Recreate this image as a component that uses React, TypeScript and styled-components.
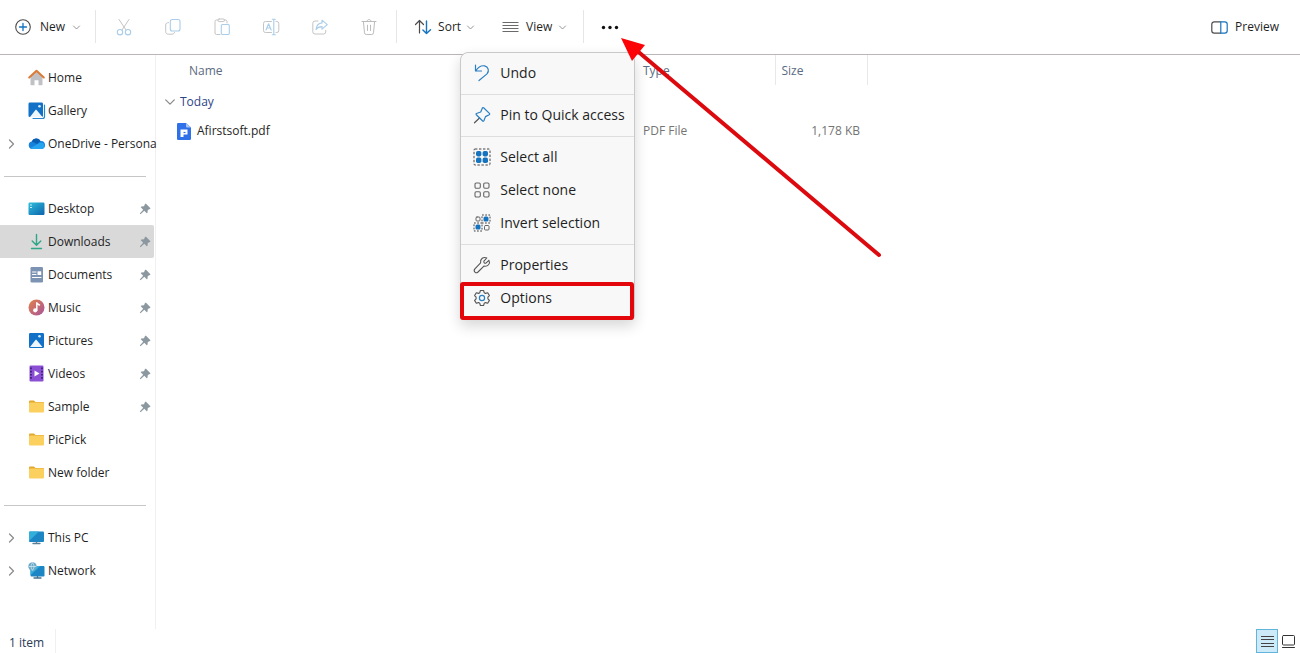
import React from 'react';
import styled, { createGlobalStyle } from 'styled-components';

const GlobalStyle = createGlobalStyle`
  *, *::before, *::after { box-sizing: border-box; }
  body {
    margin: 0;
    background: #fff;
    color: #1f1f1f;
    font: 12px/16px "Open Sans", "Noto Sans", sans-serif;
  }
  button {
    font: inherit;
    color: inherit;
    background: none;
    border: 0;
    padding: 0;
  }
  svg { display: block; flex: none; overflow: visible; }
`;

const Window = styled.div`
  display: flex;
  flex-direction: column;
  min-height: 100vh;
`;

const Toolbar = styled.header`
  position: relative;
  z-index: 2;
  display: flex;
  align-items: stretch;
  height: 55px;
  border-bottom: 1px solid #bdb6b9;
`;

const ToolGroup = styled.div<{ $pad?: number }>`
  position: relative;
  display: flex;
  align-items: stretch;
  padding: 0 ${(p) => p.$pad ?? 0}px;
`;

const Divider = styled.span`
  width: 1px;
  height: 33px;
  margin-top: 10px;
  background: #e6e6e6;
`;

const ToolButton = styled.button<{ $gap?: number }>`
  display: flex;
  align-items: center;
  gap: ${(p) => p.$gap ?? 6}px;
  padding: 0 14px;
`;

const IconButton = styled.button<{ $wide?: boolean }>`
  display: flex;
  align-items: center;
  justify-content: center;
  width: ${(p) => (p.$wide ? 51 : 49)}px;
`;

const Spacer = styled.div`
  flex: 1;
`;

const PreviewButton = styled(ToolButton)`
  padding-right: 21px;
`;

const Menu = styled.div`
  position: absolute;
  top: 52px;
  right: 0;
  width: 175px;
  border: 1px solid #c9c9c9;
  border-radius: 8px 8px 4px 4px;
  background: #f8f8f8;
  box-shadow: 0 6px 14px rgba(0, 0, 0, 0.16);
`;

const MenuSection = styled.div`
  padding: 3px 0 5px;
  & + & { border-top: 1px solid #dedede; }
`;

const MenuItem = styled.button<{ $marked?: boolean }>`
  position: relative;
  display: flex;
  align-items: center;
  gap: 9px;
  width: 100%;
  height: 33px;
  padding-left: 12px;
  font-size: 14px;
  line-height: 19px;
  white-space: nowrap;
  &::after {
    content: ${(p) => (p.$marked ? '""' : 'none')};
    position: absolute;
    inset: 1px 0 -6px -1px;
    border: 4px solid #e3070b;
    border-radius: 3px;
  }
`;

const Arrow = styled.svg`
  position: absolute;
  top: 36px;
  left: 35px;
  pointer-events: none;
`;

const Body = styled.div`
  display: flex;
  flex: 1;
`;

const Sidebar = styled.nav`
  display: flex;
  flex-direction: column;
  width: 156px;
  padding-top: 6px;
  border-right: 1px solid #f0f0f0;
`;

const SideItem = styled.a<{ $selected?: boolean }>`
  display: flex;
  align-items: center;
  height: 33px;
  margin-right: 1px;
  border-radius: 0 2px 2px 0;
  color: #1f1f1f;
  text-decoration: none;
  background: ${(p) => (p.$selected ? '#d9d9d9' : 'transparent')};
`;

const ChevronSlot = styled.span`
  width: 28px;
  padding-left: 8px;
`;

const SideLabel = styled.span`
  flex: 1;
  min-width: 0;
  margin-left: 3px;
  white-space: nowrap;
`;

const PinSlot = styled.span`
  padding-right: 3px;
`;

const Rule = styled.hr`
  width: 142px;
  height: 1px;
  margin: 16px 4px 15px;
  border: 0;
  background: #c6c6c6;
`;

const Files = styled.main`
  flex: 1;
  min-width: 0;
`;

const Table = styled.table`
  width: 100%;
  table-layout: fixed;
  border-collapse: collapse;
`;

const HeadCell = styled.th<{ $ruled?: boolean; $indent?: number }>`
  height: 30px;
  padding: 2px 0 0 ${(p) => p.$indent ?? 6}px;
  border-right: ${(p) => (p.$ruled ? '1px solid #e8e8e8' : '0')};
  color: #5b6b82;
  font-weight: 400;
  text-align: left;
`;

const GroupCell = styled.th`
  height: 34px;
  padding: 0 0 0 9px;
  color: #2f4486;
  font-weight: 400;
  text-align: left;
`;

const Cell = styled.td<{ $right?: boolean; $indent?: number }>`
  height: 24px;
  padding: 0 7px 0 ${(p) => p.$indent ?? 8}px;
  color: #747474;
  text-align: ${(p) => (p.$right ? 'right' : 'left')};
`;

const Inline = styled.span<{ $gap: number; $dark?: boolean }>`
  display: flex;
  align-items: center;
  gap: ${(p) => p.$gap}px;
  color: ${(p) => (p.$dark ? '#262626' : 'inherit')};
`;

const StatusBar = styled.footer`
  display: flex;
  align-items: stretch;
  justify-content: space-between;
  height: 24px;
`;

const StatusText = styled.span`
  padding: 6px 11px 0 9px;
  border-right: 1px solid #f0f0f0;
  color: #2c3c58;
`;

const ViewSwitch = styled.div`
  display: flex;
  padding-right: 1px;
`;

const ViewButton = styled.button<{ $on?: boolean }>`
  display: flex;
  align-items: center;
  justify-content: center;
  width: ${(p) => (p.$on ? 22 : 21)}px;
  border: ${(p) => (p.$on ? '1px solid #62b4dc' : '0')};
  background: ${(p) => (p.$on ? '#cdeaf8' : 'transparent')};
`;

type IconProps = { w?: number; h?: number; box?: string; children: React.ReactNode };

const Icon = ({ w = 18, h = 18, box, children }: IconProps) => (
  <svg
    width={w}
    height={h}
    viewBox={box ?? `0 0 ${w} ${h}`}
    fill="none"
    strokeLinecap="round"
    strokeLinejoin="round"
    aria-hidden="true"
  >
    {children}
  </svg>
);

const ChevronDown = ({ size = 7, color = '#8a8a8a' }) => (
  <Icon w={size} h={size} box="0 0 7 7">
    <path d="M.5 2 3.5 5 6.500 2" stroke={color} strokeWidth="0.9" />
  </Icon>
);

const ChevronRight = () => (
  <Icon w={7} h={10}>
    <path d="M1.500 1 5.500 5 1.500 9" stroke="#8a8a8a" strokeWidth="1.200" />
  </Icon>
);

const GREY = '#c4c4c4';
const PALE = '#a9cdea';
const BLUE = '#1673bd';
const INK = '#4b4b4b';

const NewIcon = () => (
  <Icon w={17} h={17}>
    <circle cx="8" cy="8" r="7.300" stroke={INK} strokeWidth="1.100" />
    <path d="M8 4.500v7M4.500 8h7" stroke={BLUE} strokeWidth="1.300" />
  </Icon>
);

const CutIcon = () => (
  <Icon>
    <path d="M4 1.500 11 12M14 1.500 7 12" stroke={GREY} />
    <circle cx="5" cy="14.200" r="2.700" stroke={PALE} strokeWidth="1.100" />
    <circle cx="13" cy="14.200" r="2.700" stroke={PALE} strokeWidth="1.100" />
  </Icon>
);

const CopyIcon = () => (
  <Icon>
    <path d="M4.500 4.600C2.700 4.700 1.700 5.500 1.700 7v6.500c0 1.700 1 2.700 2.700 2.700H8c1.400 0 2.200-.6 2.500-1.700" stroke={GREY} />
    <rect x="6.300" y="1.500" width="9.700" height="11.500" rx="2" stroke={PALE} strokeWidth="1.100" />
  </Icon>
);

const PasteIcon = () => (
  <Icon>
    <path d="M7 16.500H3.500a1.500 1.500 0 0 1-1.500-1.500V3.500A1.500 1.500 0 0 1 3.500 2H5M11 2h1.500A1.500 1.500 0 0 1 14 3.500V5" stroke={GREY} />
    <rect x="5" y="1" width="6.500" height="2.600" rx="1.200" stroke={GREY} />
    <rect x="8.300" y="6.500" width="8" height="10" rx="1.200" stroke={PALE} strokeWidth="1.100" />
  </Icon>
);

const RenameIcon = () => (
  <Icon>
    <path d="M9.500 3.500H3.500A2 2 0 0 0 1.500 5.500v7a2 2 0 0 0 2 2h6M14 3.500h.8a2 2 0 0 1 2 2v7a2 2 0 0 1-2 2H14" stroke={GREY} />
    <path d="M4 12 6.600 5.700 9.200 12M4.900 10h3.400M10.300 1.200h3M10.300 16.800h3M11.800 1.200v15.600" stroke={PALE} strokeWidth="1.100" />
  </Icon>
);

const ShareIcon = () => (
  <Icon>
    <path d="M7 3H4a2.200 2.200 0 0 0-2.200 2.200v8.500A2.200 2.200 0 0 0 4 16h8.500a2.200 2.200 0 0 0 2.200-2.200v-1.500" stroke={GREY} />
    <path d="M11 2.200 16.300 6.700 11 11.200V8.600c-2.700 0-4.600.8-6 2.900.4-3.600 2.300-6.200 6-6.600Z" stroke={PALE} strokeWidth="1.100" />
  </Icon>
);

const TrashIcon = () => (
  <Icon>
    <path d="M2 3.500h14M3.400 3.500l1.100 11.300a1.800 1.800 0 0 0 1.800 1.700h5.400a1.800 1.800 0 0 0 1.800-1.700l1.100-11.300M7 3.300C7 .8 11 .8 11 3.300M7.500 7.200v5.300M10.500 7.200v5.300" stroke="#bcbcbc" />
  </Icon>
);

const SortIcon = () => (
  <Icon>
    <path d="M5.500 15V2.500M1.500 6.500l4-4 4 4" stroke={INK} strokeWidth="1.200" />
    <path d="M12.500 3v12.500M8.900 12l3.600 3.600 4-3.900" stroke={BLUE} strokeWidth="1.400" />
  </Icon>
);

const ViewIcon = () => (
  <Icon w={17}>
    <path d="M.5 4.500h16M.5 7.500h16M.5 10.500h16M.5 13.500h16" stroke="#6a6a6a" strokeLinecap="butt" />
  </Icon>
);

const MoreIcon = () => (
  <Icon w={18} h={4}>
    <circle cx="2.500" cy="2.500" r="1.700" fill="#111" />
    <circle cx="9" cy="2.500" r="1.700" fill="#111" />
    <circle cx="15.500" cy="2.500" r="1.700" fill="#111" />
  </Icon>
);

const PreviewIcon = () => (
  <Icon w={17} h={13}>
    <path d="M9.500.8H3.200A2.400 2.400 0 0 0 .8 3.200v6.600a2.400 2.400 0 0 0 2.400 2.400h6.300" stroke={INK} strokeWidth="1.200" />
    <path d="M9.800.8h4a2.400 2.400 0 0 1 2.400 2.400v6.600a2.400 2.400 0 0 1-2.400 2.400h-4Z" stroke={BLUE} strokeWidth="1.200" />
  </Icon>
);

const UndoIcon = () => (
  <Icon>
    <path d="M2.500 1v6h6M2.700 6.800C5 3.500 8 1.200 11.500 1.900c4 .9 5 5 2.500 8L6 16.500" stroke="#2b7fc3" strokeWidth="1.200" />
  </Icon>
);

const PinOutlineIcon = () => (
  <Icon>
    <path d="m6.500 12-5 4.800" stroke="#555" strokeWidth="1.200" />
    <path d="m10.600 1.700 5.800 5.700c.5.500.3 1-.2 1.300l-3.700 1.900-1.600 4.200c-.3.600-.8.600-1.200.2L3.300 8.700c-.4-.5-.3-1 .2-1.200l4.200-1.500 1.700-4c.3-.6.800-.6 1.200-.3Z" stroke="#2b7fc3" strokeWidth="1.200" />
  </Icon>
);

const SelectAllIcon = () => (
  <Icon>
    <rect x="1" y="1" width="16" height="16" rx="1" stroke="#444" strokeDasharray="2.400 1.600" strokeLinecap="butt" />
    {[3, 9.600].map((x) => [3, 9.600].map((y) => (
      <rect key={`${x}-${y}`} x={x} y={y} width="5.400" height="5.400" rx="1.800" fill={BLUE} />
    )))}
  </Icon>
);

const SelectNoneIcon = () => (
  <Icon>
    {[2, 10.700].map((x) => [2, 10.700].map((y) => (
      <rect key={`${x}-${y}`} x={x} y={y} width="5.300" height="5.300" rx="1.200" stroke="#666" strokeWidth="1.100" />
    )))}
  </Icon>
);

const InvertIcon = () => (
  <Icon>
    <rect x="3" y="3" width="4" height="4" rx="1" stroke="#666" />
    <rect x="11.500" y="11.500" width="4.500" height="4.500" rx="1" stroke="#666" />
    <rect x="9" y="1" width="8" height="8" stroke="#444" strokeDasharray="1.800 1.400" strokeLinecap="butt" />
    <rect x="1" y="9" width="8" height="8" stroke="#444" strokeDasharray="1.800 1.400" strokeLinecap="butt" />
    <rect x="10.500" y="2.500" width="5" height="5" rx="1.600" fill={BLUE} />
    <rect x="2.500" y="10.500" width="5" height="5" rx="1.600" fill={BLUE} />
  </Icon>
);

const WrenchIcon = () => (
  <Icon>
    <path d="M15.900 4.300 12.900 7.200c-1.400.3-2.300-.8-2-2l2.900-3.200C10.500.4 7 2.800 7.600 6.900L1.900 12.900c-2 2.300 1 5 3.100 3.100l5.900-5.900c3.900.8 6.700-2.500 5-5.800Z" stroke="#555" strokeWidth="1.100" />
  </Icon>
);

const GearIcon = () => (
  <Icon>
    <path d="M7.400 1.500h3.200l.6 2.200 1.300.7 2.200-.6 1.700 2.800-1.500 1.600v1.600l1.500 1.600-1.700 2.800-2.200-.6-1.300.7-.6 2.200H7.400l-.6-2.200-1.300-.7-2.200.6-1.700-2.800 1.500-1.600V8.200L1.600 6.600l1.700-2.800 2.200.6 1.300-.7Z" stroke="#555" strokeWidth="1.100" />
    <circle cx="9" cy="9" r="2.600" stroke="#2b7fc3" strokeWidth="1.200" />
  </Icon>
);

const HomeIcon = () => (
  <Icon w={17} h={17}>
    <path d="M2.500 7.500 8.500 2l6 5.500v8a.8.8 0 0 1-.8.8h-3.200v-5h-4v5H3.300a.8.8 0 0 1-.8-.8Z" fill="#bfc1c4" />
    <path d="M1.200 8.500 8.500 1.800l7.300 6.700" stroke="#dd7a35" strokeWidth="2" />
  </Icon>
);

const Landscape = ({ stack }: { stack?: boolean }) => (
  <Icon w={17} h={17}>
    {stack && <path d="M5 16.500h9.500a2 2 0 0 0 2-2V3" stroke="#2a86cc" strokeWidth="1.200" />}
    <rect x={stack ? 0.5 : 1} y={stack ? 0.5 : 1} width={stack ? 14.500 : 15} height={stack ? 14.500 : 15} rx="1.300" fill="#1271c6" />
    <path d="M2 15 7.300 8.200c.5-.6 1-.6 1.500 0L14.500 15Z" fill="#eef6fd" />
    <circle cx="11.500" cy="4.300" r="1.300" fill="#d8ecfb" />
  </Icon>
);

const CloudIcon = () => (
  <Icon w={17} h={17}>
    <path d="M4.300 14A3.800 3.800 0 0 1 3.700 6.500 5 5 0 0 1 12.500 6a4 4 0 0 1 1 8Z" fill="#1583dc" />
    <path d="M3.700 6.500A5 5 0 0 1 12.500 6L9 9Z" fill="#0a5db0" />
    <path d="M2.200 13.300 12 7.700a3.400 3.400 0 0 1 4.500 3.200A3.200 3.200 0 0 1 13.500 14H4.300Z" fill="#27a4ef" />
  </Icon>
);

const DesktopIcon = () => (
  <Icon w={17} h={17}>
    <defs>
      <linearGradient id="desk" x1="0" y1="0" x2="1" y2="1">
        <stop offset="0" stopColor="#2fc0dc" />
        <stop offset="1" stopColor="#0c62ac" />
      </linearGradient>
    </defs>
    <rect x=".5" y="2.500" width="16" height="12.500" rx="1.200" fill="url(#desk)" />
    <path d="M2.500 5h1M2.500 7.500h1" stroke="#d6f4fb" />
  </Icon>
);

const DownloadIcon = () => (
  <Icon w={17} h={17}>
    <path d="M8.500 1.500v10.500M4.200 8l4.300 4.300L12.800 8M3.500 15.500h10" stroke="#2fa687" strokeWidth="1.400" />
  </Icon>
);

const DocumentIcon = () => (
  <Icon w={17} h={17}>
    <rect x="2.500" y="1" width="12.500" height="15.500" rx="1.200" fill="#7d93b3" />
    <path d="M4.500 6h3.500M4.500 8.500h3.500M4.500 11.500h8.500" stroke="#fff" />
    <rect x="9.500" y="5.300" width="3.700" height="3.700" fill="#fff" />
  </Icon>
);

const MusicIcon = () => (
  <Icon w={17} h={17}>
    <defs>
      <linearGradient id="music" x1="0" y1="0" x2="1" y2="1">
        <stop offset="0" stopColor="#e38148" />
        <stop offset="1" stopColor="#a8559c" />
      </linearGradient>
    </defs>
    <circle cx="8.500" cy="8.500" r="8" fill="url(#music)" />
    <path d="M8.800 11.300V3.800c.6 1.300 1.600 1.600 2.700 2.200" stroke="#fff" strokeWidth="1.500" />
    <circle cx="7.200" cy="11.300" r="2.100" fill="#fff" />
  </Icon>
);

const VideoIcon = () => (
  <Icon w={17} h={17}>
    <rect x="1.500" y=".5" width="14" height="16" rx="1.200" fill="#8a4fd3" />
    <path d="M3 2.500v12.500M14 2.500v12.500" stroke="#3c1d78" strokeWidth="1.700" strokeDasharray="1.700 1.500" strokeLinecap="butt" />
    <path d="M6.500 5.500v6l5-3Z" fill="#fff" />
  </Icon>
);

const FolderIcon = () => (
  <Icon w={17} h={17}>
    <path d="M1 3.500a1 1 0 0 1 1-1h4l1.500 1.500H15a1 1 0 0 1 1 1v3H1Z" fill="#e3a92c" />
    <rect x="1" y="4.500" width="15" height="10" rx="1" fill="#fbd05e" />
  </Icon>
);

const Monitor = () => (
  <>
    <rect x="1" y="2.500" width="15" height="10.500" rx="1" fill="#1c86c4" />
    <path d="M1 12V3.500a1 1 0 0 1 1-1h9Z" fill="#32aedb" />
    <path d="M5 14.500h7M8.500 13v1" stroke="#5a7f99" strokeWidth="1.300" />
  </>
);

const PcIcon = () => (
  <Icon w={17} h={17}><Monitor /></Icon>
);

const NetworkIcon = () => (
  <Icon w={17} h={17}>
    <rect x="2.500" y="4" width="14" height="10.500" rx="1" fill="#1c86c4" />
    <path d="M2.500 13V5a1 1 0 0 1 1-1h9Z" fill="#32aedb" />
    <path d="M6 16h7M9.500 14.500v1" stroke="#47708c" strokeWidth="1.300" />
    <circle cx="4.500" cy="4.500" r="4.200" fill="#6aa9c7" />
    <path d="M1 4.500h7M4.500.8c-2 2-2 5.400 0 7.400M4.500.8c2 2 2 5.400 0 7.400" stroke="#d9eef7" strokeWidth=".7" />
  </Icon>
);

const PinIcon = () => (
  <Icon w={12} h={12}>
    <path d="M7 .8 11.200 5c.4.400.2.900-.3 1L8.800 7 8.500 9.600c-.1.600-.6.800-1 .4L5.300 7.800 1.500 11.200.8 10.500 4.200 6.700 2 4.600c-.4-.4-.2-.9.400-1L5 3.200 6 1.100c.2-.5.600-.6 1-.3Z" fill="#8b989f" />
  </Icon>
);

const PdfIcon = () => (
  <Icon w={14} h={17}>
    <path d="M1.200 0H9l5 4.500v11.300a1.200 1.200 0 0 1-1.200 1.200H1.200A1.200 1.200 0 0 1 0 15.800V1.200A1.200 1.200 0 0 1 1.200 0Z" fill="#3070e8" />
    <path d="M9 0v3.500a1 1 0 0 0 1 1h4Z" fill="#a8c5f8" />
    <path d="M3.500 6.500h7v5H6.500V14h-3Z" fill="#fff" />
    <path d="M6.500 9.500h2" stroke="#3070e8" strokeWidth="1.200" strokeLinecap="butt" />
  </Icon>
);

const fileActions = [
  { label: 'Cut', icon: <CutIcon /> },
  { label: 'Copy', icon: <CopyIcon /> },
  { label: 'Paste', icon: <PasteIcon /> },
  { label: 'Rename', icon: <RenameIcon /> },
  { label: 'Share', icon: <ShareIcon /> },
  { label: 'Delete', icon: <TrashIcon /> },
];

const menuSections = [
  [{ label: 'Undo', icon: <UndoIcon /> }],
  [{ label: 'Pin to Quick access', icon: <PinOutlineIcon /> }],
  [
    { label: 'Select all', icon: <SelectAllIcon /> },
    { label: 'Select none', icon: <SelectNoneIcon /> },
    { label: 'Invert selection', icon: <InvertIcon /> },
  ],
  [
    { label: 'Properties', icon: <WrenchIcon /> },
    { label: 'Options', icon: <GearIcon />, marked: true },
  ],
] as { label: string; icon: React.ReactNode; marked?: boolean }[][];

type Place = { label: string; icon: React.ReactNode; expands?: boolean; pinned?: boolean; selected?: boolean };

const places: Place[][] = [
  [
    { label: 'Home', icon: <HomeIcon /> },
    { label: 'Gallery', icon: <Landscape stack /> },
    { label: 'OneDrive - Persona', icon: <CloudIcon />, expands: true },
  ],
  [
    { label: 'Desktop', icon: <DesktopIcon />, pinned: true },
    { label: 'Downloads', icon: <DownloadIcon />, pinned: true, selected: true },
    { label: 'Documents', icon: <DocumentIcon />, pinned: true },
    { label: 'Music', icon: <MusicIcon />, pinned: true },
    { label: 'Pictures', icon: <Landscape />, pinned: true },
    { label: 'Videos', icon: <VideoIcon />, pinned: true },
    { label: 'Sample', icon: <FolderIcon />, pinned: true },
    { label: 'PicPick', icon: <FolderIcon /> },
    { label: 'New folder', icon: <FolderIcon /> },
  ],
  [
    { label: 'This PC', icon: <PcIcon />, expands: true },
    { label: 'Network', icon: <NetworkIcon />, expands: true },
  ],
];

export default function App() {
  return (
    <Window>
      <GlobalStyle />
      <Toolbar>
        <ToolGroup $pad={1}>
          <ToolButton $gap={8}><NewIcon />New<ChevronDown /></ToolButton>
        </ToolGroup>
        <Divider />
        <ToolGroup $pad={3}>
          {fileActions.map((a) => (
            <IconButton key={a.label} aria-label={a.label}>{a.icon}</IconButton>
          ))}
        </ToolGroup>
        <Divider />
        <ToolGroup $pad={3}>
          <ToolButton><SortIcon />Sort<ChevronDown /></ToolButton>
          <ToolButton $gap={7}><ViewIcon />View<ChevronDown /></ToolButton>
        </ToolGroup>
        <Divider />
        <ToolGroup>
          <IconButton $wide aria-label="See more" aria-expanded="true"><MoreIcon /></IconButton>
          <Menu>
            {menuSections.map((items) => (
              <MenuSection key={items[0].label}>
                {items.map((m) => (
                  <MenuItem key={m.label} $marked={m.marked}>{m.icon}{m.label}</MenuItem>
                ))}
              </MenuSection>
            ))}
          </Menu>
          <Arrow width="264" height="224" viewBox="0 0 264 224" aria-hidden="true">
            <path d="M16 13 260 219" stroke="#dc0a0e" strokeWidth="4" strokeLinecap="round" />
            <path d="M2 2 26 9 13 25Z" fill="#fb0307" />
          </Arrow>
        </ToolGroup>
        <Spacer />
        <PreviewButton $gap={7}><PreviewIcon />Preview</PreviewButton>
      </Toolbar>

      <Body>
        <Sidebar>
          {places.map((group, i) => (
            <React.Fragment key={group[0].label}>
              {i > 0 && <Rule />}
              {group.map((p) => (
                <SideItem key={p.label} href="#" $selected={p.selected}>
                  <ChevronSlot>{p.expands && <ChevronRight />}</ChevronSlot>
                  {p.icon}
                  <SideLabel>{p.label}</SideLabel>
                  {p.pinned && <PinSlot><PinIcon /></PinSlot>}
                </SideItem>
              ))}
            </React.Fragment>
          ))}
        </Sidebar>
        <Files>
          <Table>
            <colgroup>
              <col style={{ width: 479 }} />
              <col style={{ width: 140 }} />
              <col style={{ width: 92 }} />
              <col />
            </colgroup>
            <thead>
              <tr>
                <HeadCell $indent={33}>Name</HeadCell>
                <HeadCell $ruled $indent={8}>Type</HeadCell>
                <HeadCell $ruled>Size</HeadCell>
                <td />
              </tr>
            </thead>
            <tbody>
              <tr>
                <GroupCell colSpan={4}>
                  <Inline $gap={5}><ChevronDown size={10} />Today</Inline>
                </GroupCell>
              </tr>
              <tr>
                <Cell $indent={21}>
                  <Inline $gap={6} $dark><PdfIcon />Afirstsoft.pdf</Inline>
                </Cell>
                <Cell>PDF File</Cell>
                <Cell $right>1,178 KB</Cell>
                <td />
              </tr>
            </tbody>
          </Table>
        </Files>
      </Body>

      <StatusBar>
        <StatusText>1 item</StatusText>
        <ViewSwitch>
          <ViewButton $on aria-label="Details view">
            <Icon w={13} h={13}>
              <path d="M0 1.500h13M0 4.500h13M0 8.500h13M0 11.500h13" stroke="#444" strokeLinecap="butt" />
            </Icon>
          </ViewButton>
          <ViewButton aria-label="Large icons view">
            <Icon w={13} h={13}>
              <rect x=".5" y=".5" width="12" height="9.500" rx="1" stroke="#333" />
              <path d="M.5 12.500h12" stroke="#333" />
            </Icon>
          </ViewButton>
        </ViewSwitch>
      </StatusBar>
    </Window>
  );
}
